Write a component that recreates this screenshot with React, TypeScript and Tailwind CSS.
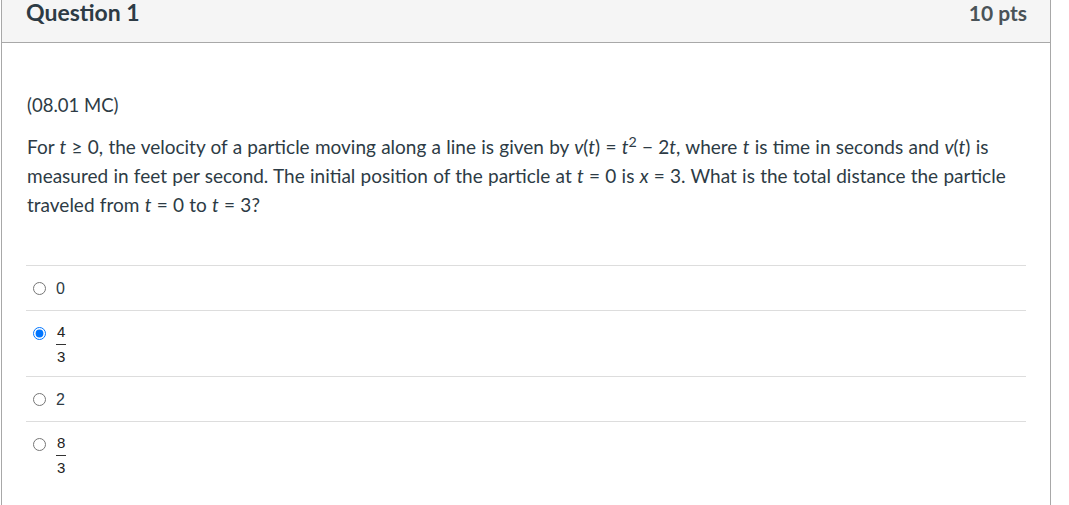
import React from "react";

function Radio({ checked }: { checked?: boolean }) {
  return (
    <div className="h-[21px] flex items-center shrink-0">
      <input type="radio" name="q1" checked={!!checked} readOnly className="m-0 w-[13px] h-[13px]" />
    </div>
  );
}

function Frac({ num, den }: { num: string; den: string }) {
  return (
    <div className="flex flex-col items-center text-[15px] text-[#222]">
      <span className="leading-[17px] px-[1px]">{num}</span>
      <span className="block h-[1px] w-full bg-[#333] mt-[4px] mb-[3px]" />
      <span className="leading-[17px] px-[1px]">{den}</span>
    </div>
  );
}

const answers: { key: string; content: React.ReactNode; checked?: boolean }[] = [
  { key: "a", content: <span className="text-[16px]">0</span> },
  { key: "b", content: <Frac num="4" den="3" />, checked: true },
  { key: "c", content: <span className="text-[16px]">2</span> },
  { key: "d", content: <Frac num="8" den="3" /> },
];

// symbols Lato lacks – keep them from growing the line box
function Sym({ c }: { c: string }) {
  return <span className="leading-[0]">{c}</span>;
}

export default function App() {
  return (
    <div className="min-h-screen bg-white pl-[1px]" style={{ fontFamily: "Lato, 'Open Sans', sans-serif" }}>
      <div className="w-[1050px] min-h-[505px] border-l border-r border-[#a8a8a8] text-[#2d3b45]">
        <div className="h-[43px] bg-[#f5f5f5] border-b border-[#a8a8a8] flex justify-between items-start pl-[24px] pr-[23px]">
          <h2 className="text-[23px] font-bold leading-[24px]">Question 1</h2>
          <div className="text-[21px] font-bold leading-[24px] pt-[1px] text-[#4a5358]">10 pts</div>
        </div>
        <div className="pl-[24px] pr-[23px] pt-[48px]">
          <div className="leading-[29px] pl-[1px]">
            <p className="mb-[13px] text-[18.5px]">(08.01 MC)</p>
            <p className="text-[19px] [word-spacing:0.4px] -mt-[1px] pb-[1px]">
              For <i>t</i> <Sym c="≥" /> 0, the velocity of a particle moving along a line is given by <i>v</i>(<i>t</i>) = <i>t</i>
              <sup>2</sup> <Sym c="−" /> 2<i>t</i>, where <i>t</i> is time in seconds and <i>v</i>(<i>t</i>) is measured in feet
              per second. The initial position of the particle at <i>t</i> = 0 is <i>x</i> = 3. What is the total distance the
              particle traveled from <i>t</i> = 0 to <i>t</i> = 3?
            </p>
          </div>
          <div className="mt-[45px] w-[1000px]">
            {answers.map(a => (
              <div key={a.key} className="border-t border-[#dddddd] pt-[12px] pb-[11px] pl-[7px] flex items-start gap-[10px]">
                <Radio checked={a.checked} />
                <div className="leading-[21px]" style={{ fontFamily: '"Liberation Sans", Arial, sans-serif' }}>
                  {a.content}
                </div>
              </div>
            ))}
          </div>
        </div>
      </div>
    </div>
  );
}
